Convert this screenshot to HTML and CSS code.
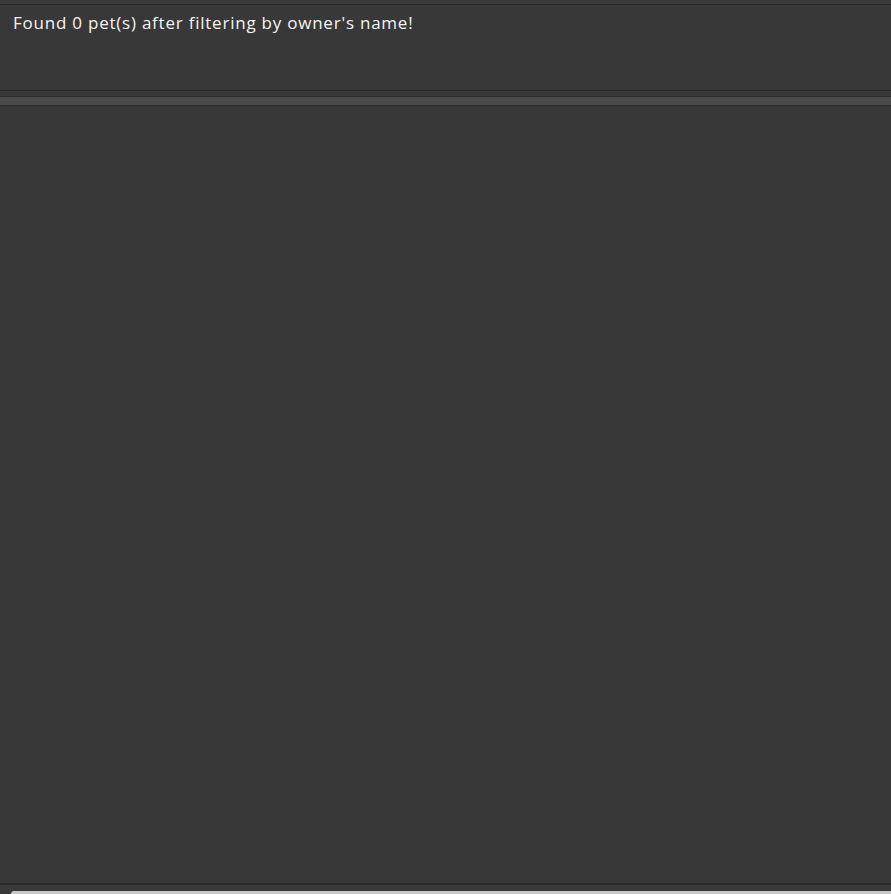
FILE: index.html
```html
<!DOCTYPE html>
<html>
<head>
<meta charset="utf-8">
<link rel="stylesheet" href="styles.css">
</head>
<body>
<div class="app">
  <div class="top-gap"></div>
  <div class="result">Found 0 pet(s) after filtering by owner's name!</div>
  <div class="spacer"></div>
  <div class="divider"></div>
  <div class="list"></div>
  <div class="footer-line"></div>
  <div class="footer-gap"></div>
  <div class="status"></div>
</div>
</body>
</html>
```
FILE: styles.css
```css
html, body {
  margin: 0;
  padding: 0;
  height: 100%;
  background: #383838;
  overflow: hidden;
}
.app {
  display: flex;
  flex-direction: column;
  height: 894px;
}
.top-gap {
  height: 4px;
  background: #3a3a3a;
  border-bottom: 1px solid #2b2b2b;
  flex: none;
}
.result {
  flex: none;
  height: 86px;
  box-sizing: border-box;
  padding: 7px 13px;
  color: #f4f4f4;
  font-family: "Open Sans", "DejaVu Sans", sans-serif;
  font-size: 17px;
  line-height: 22px;
  letter-spacing: 0.77px;
  border-bottom: 1px solid #2b2b2b;
  background: #383838;
}
.spacer {
  flex: none;
  height: 5px;
  background: #3a3a3a;
}
.divider {
  flex: none;
  height: 8px;
  background: #4b4b4b;
  border-top: 1px solid #2b2b2b;
  border-bottom: 1px solid #2b2b2b;
}
.list {
  flex: 1;
  background: #383838;
}
.footer-line {
  flex: none;
  height: 2px;
  background: #2b2b2b;
}
.footer-gap {
  flex: none;
  height: 6px;
  background: #3a3a3a;
}
.status {
  flex: none;
  height: 3px;
  margin-left: 11px;
  background: #c8c8c8;
  border-top-left-radius: 4px;
}
```
